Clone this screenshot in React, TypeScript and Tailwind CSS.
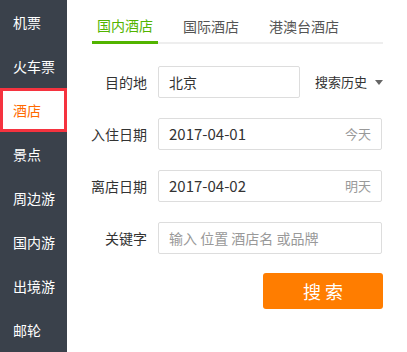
import React from "react";

const items = ["机票", "火车票", "酒店", "景点", "周边游", "国内游", "出境游", "邮轮"];
const font = { fontFamily: '"Noto Sans CJK SC", "Noto Sans", sans-serif' };

function Field({ label, children }: { label: string; children: React.ReactNode }) {
  return (
    <div className="flex items-center h-[32px]">
      <div className="w-[80px] pr-[0px] text-right text-[14px] text-[#333] leading-none">{label}</div>
      <div className="ml-[11px] flex items-center">{children}</div>
    </div>
  );
}

export default function App() {
  return (
    <div className="flex w-[407px] h-[352px] bg-white overflow-hidden" style={font}>
      <div className="w-[67px] h-full bg-[#3a414b] flex flex-col">
        {items.map((t) => (
          <div
            key={t}
            className={
              t === "酒店"
                ? "h-[44px] flex items-center pl-[10px] bg-white border-[3px] border-[#f5333f] text-[#ff6a00] text-[14px]"
                : "h-[44px] flex items-center pl-[13px] text-white text-[14px]"
            }
          >
            {t}
          </div>
        ))}
      </div>
      <div className="flex-1 flex flex-col">
        <div className="ml-[25px] w-[291px] mt-[8px] flex border-b-2 border-[#eeeeee] h-[36px] gap-[20px]">
          <div className="px-[5px] h-[36px] -mb-[2px] border-b-[3px] border-[#52b400] text-[#52b400] text-[14px] flex items-center pt-[1px]">
            国内酒店
          </div>
          <div className="px-[5px] h-[36px] text-[#555] text-[14px] flex items-center">国际酒店</div>
          <div className="px-[5px] h-[36px] text-[#555] text-[14px] flex items-center">港澳台酒店</div>
        </div>
        <div className="mt-[22px] flex flex-col gap-[20px]">
          <Field label="目的地">
            <div className="w-[142px] h-[32px] border border-[#dddddd] rounded-[2px] flex items-center pl-[10px] text-[14px] text-[#333]">
              北京
            </div>
            <div className="ml-[15px] flex items-center text-[13px] text-[#333]">
              搜索历史
              <svg width="8" height="5" viewBox="0 0 8 5" className="ml-[8px]">
                <path d="M0 0 L8 0 L4 5 Z" fill="#666" />
              </svg>
            </div>
          </Field>
          <Field label="入住日期">
            <div className="w-[224px] h-[32px] border border-[#dddddd] rounded-[2px] flex items-center justify-between pl-[10px] pr-[10px] text-[15px] text-[#333]">
              <span>2017-04-01</span>
              <span className="text-[#999] text-[13px]">今天</span>
            </div>
          </Field>
          <Field label="离店日期">
            <div className="w-[224px] h-[32px] border border-[#dddddd] rounded-[2px] flex items-center justify-between pl-[10px] pr-[10px] text-[15px] text-[#333]">
              <span>2017-04-02</span>
              <span className="text-[#999] text-[13px]">明天</span>
            </div>
          </Field>
          <Field label="关键字">
            <div className="w-[224px] h-[32px] border border-[#dddddd] rounded-[2px] flex items-center pl-[10px] text-[14px] text-[#999]">
              输入 位置 酒店名 或品牌
            </div>
          </Field>
        </div>
        <div className="mt-[19px] ml-[196px] w-[120px] h-[36px] bg-[#ff7d00] rounded-[3px] flex items-center justify-center text-white text-[18px] tracking-[4px] pl-[4px]">
          搜索
        </div>
      </div>
    </div>
  );
}
